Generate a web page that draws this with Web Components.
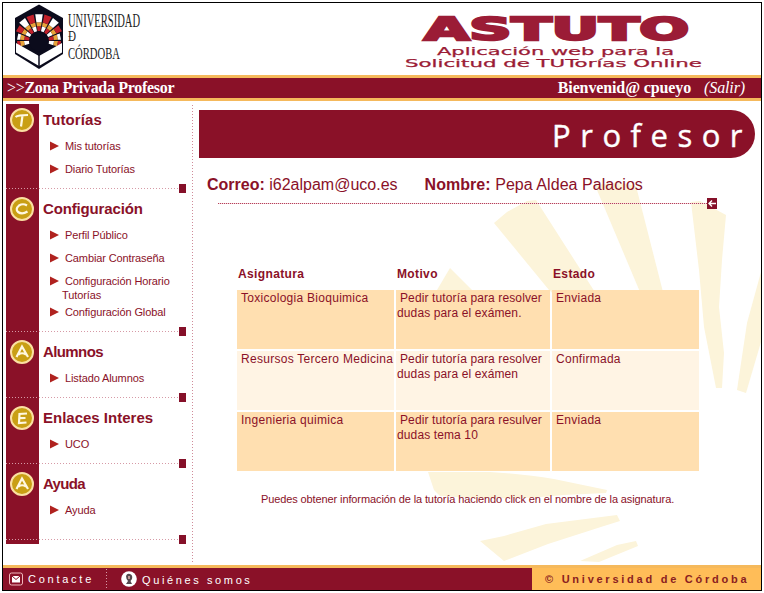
<!DOCTYPE html>
<html lang="es"><head><meta charset="utf-8"><title>Astuto</title>
<style>
html,body{margin:0;background:#fff}
body{font-family:"Liberation Sans",Arial,sans-serif;--wine:#8a1128;--gold:#f5b95c;color:#8a1128}
</style></head><body>
<astuto-app></astuto-app>
<script>
const def=(name,html,init)=>customElements.define(name,class extends HTMLElement{
  constructor(){super();this.attachShadow({mode:'open'});}
  connectedCallback(){this.shadowRoot.innerHTML=html;if(init)init(this,this.shadowRoot);}
});

def('uco-logo',`<style>:host{display:block;width:200px;height:70px}svg{display:block}</style>
<svg width="200" height="70" viewBox="0 0 200 70">
<path d="M36 1.500L60 15V51L36 66L12 51V15Z" fill="#0b0b1c"/>
<g id="rays"></g>
<circle cx="36" cy="39" r="9.500" fill="#0b0b1c"/>
<path d="M13 40L36 53V63L13 49.500ZM59 40L36 53V63L59 49.500Z" fill="#fff"/>
<path d="M36 52V65" stroke="#0b0b1c" stroke-width="1.500"/>
<g font-family="Liberation Serif,serif" font-size="18" fill="#222">
<text x="65" y="23.500" textLength="72" lengthAdjust="spacingAndGlyphs">UNIVERSIDAD</text>
<text x="65" y="38" font-size="14" textLength="8" lengthAdjust="spacingAndGlyphs">Đ</text>
<text x="65" y="56" font-size="17" textLength="52" lengthAdjust="spacingAndGlyphs">CÓRDOBA</text></g></svg>`,(h,r)=>{
  const g=r.getElementById('rays');let s='';
  const p=(a,d)=>`${(36+d*Math.cos(a)).toFixed(2)} ${(38-d*Math.sin(a)).toFixed(2)}`;
  for(let i=0;i<11;i++){
    const a=(-8+i*19.6)*Math.PI/180,w=.14;
    const outer=i>2&&i<8?27:(i==2||i==8?25:22);
    const band=(d1,d2,c)=>`<path fill="${c}" d="M${p(a-w,d1)}L${p(a-w,d2)}L${p(a+w,d2)}L${p(a+w,d1)}Z"/>`;
    s+=band(10,15,i%2?'#c3202b':'#fff')+band(15,19,'#e8a33a')+band(19,outer,i%2?'#fff':'#c3202b');
  }
  g.innerHTML=s;
});

def('astuto-brand',`<style>:host{display:block;width:310px;height:66px}svg{display:block}</style>
<svg width="310" height="66" viewBox="0 0 310 66" fill="#9b1c36" stroke="#9b1c36">
<text x="19" y="33" font-family="DejaVu Sans,sans-serif" font-weight="bold" font-size="32" stroke-width="2.400" textLength="265" lengthAdjust="spacingAndGlyphs">ASTUTO</text>
<g font-family="DejaVu Sans,sans-serif" font-size="11" stroke-width=".25">
<text x="32" y="48" textLength="237" lengthAdjust="spacingAndGlyphs">Aplicación web para la</text>
<text x="0" y="60" textLength="297" lengthAdjust="spacingAndGlyphs">Solicitud de TUTorías Online</text></g></svg>`);

def('title-strip',`<style>
:host{display:flex;justify-content:space-between;align-items:center;height:20px;padding:0 16px 0 4px;background:var(--wine);border:solid var(--gold);border-width:3px 0;color:#fff;font:bold 16px/20px "Liberation Serif",serif}
:host>div:first-of-type{letter-spacing:-.3px}
span,i{font-weight:normal}.r{display:flex;gap:13px;letter-spacing:-.12px}i{white-space:pre}</style>
<div><span>&gt;&gt;</span><slot></slot></div><div class="r"><slot name="user"></slot><i>(Salir)</i></div>`);

def('menu-item',`<style>:host{display:block;font-size:11px;line-height:14px;padding:4.500px 0;color:#8a1128}
:host(.two){padding-bottom:0;margin-bottom:-1.500px}
svg{vertical-align:-1px;margin-right:6px}div{padding-left:23px;text-indent:-12px}</style>
<div><svg width="9" height="10"><path d="M0 .5L9 5L0 9.500Z" fill="#b0221f"/></svg><slot></slot></div>`);

def('menu-section',`<style>
:host{display:block;padding-top:8px;position:relative}
header{height:24px;display:flex;align-items:center;gap:9px;padding-left:4px;margin-bottom:2px;font:bold 15px/24px "Liberation Sans",sans-serif}
svg{flex:none}.items{padding-left:33px}
footer{height:1px;margin-top:8px;width:173px;background:repeating-linear-gradient(90deg,#d69aa6 0 1px,transparent 1px 3px)}
:host([last]) footer{margin-top:18px}
.end{position:absolute;right:6px;bottom:-4px;width:7px;height:9px;background:#851029}</style>
<header><svg width="24" height="24"><circle cx="12" cy="12" r="11" fill="#c99f14" stroke="#fbe0a2" stroke-width="2"/><path fill="none" stroke="#fff8e0" stroke-width="2.200"/></svg><span></span></header>
<div class="items"><slot></slot></div><footer></footer><div class="end"></div>`,(h,r)=>{
  const glyph={T:'M5.500 9Q8 7 18 7M12.500 7.500L11 18.500',C:'M17 8.500Q13 6 9 8.500Q5 12 8 15Q12 18 17.500 14.500',A:'M6.500 17L12 6.500L18 17M8.500 14.500Q12 12 16 14.500',E:'M17 7.500L9.500 8L9 17L16.500 16.500M9.500 12.200L15.500 12'};
  r.querySelector('header path').setAttribute('d',glyph[h.getAttribute('badge')]);
  const s=r.querySelector('span');s.textContent=h.getAttribute('label');s.style.letterSpacing=(h.getAttribute('track')||0)+'px';
});

def('side-menu',`<style>:host{display:block;width:186px;height:436px;padding-bottom:4px;margin-left:3px;background:linear-gradient(90deg,var(--wine) 33px,transparent 33px)}
.first{padding-top:4px}menu-item{letter-spacing:-.11px}</style>
<menu-section class="first" badge="T" label="Tutorías" track=".1"><menu-item>Mis tutorías</menu-item><menu-item>Diario Tutorías</menu-item></menu-section>
<menu-section badge="C" label="Configuración" track="-.15"><menu-item>Perfil Público</menu-item><menu-item>Cambiar Contraseña</menu-item><menu-item class="two">Configuración Horario<br>Tutorías</menu-item><menu-item>Configuración Global</menu-item></menu-section>
<menu-section badge="A" label="Alumnos" track="-.6"><menu-item>Listado Alumnos</menu-item></menu-section>
<menu-section badge="E" label="Enlaces Interes"><menu-item>UCO</menu-item></menu-section>
<menu-section last badge="A" label="Ayuda" track="-.7"><menu-item>Ayuda</menu-item></menu-section>`);

def('page-banner',`<style>:host{display:flex;justify-content:flex-end;align-items:center;box-sizing:border-box;width:556px;height:48px;padding:1px 3px 0 0;border-radius:0 24px 24px 0;background:var(--wine);color:#fff;font:31px/48px "Open Sans","Noto Sans",sans-serif;letter-spacing:9.500px;-webkit-text-stroke:.4px #fff}</style><slot></slot>`);

def('contact-line',`<style>:host{display:flex;gap:27px;padding:17px 0 0 8px;font-size:16px;line-height:20px;height:20px;white-space:nowrap}
.n{letter-spacing:.05px}</style><span><b>Correo:</b> i62alpam@uco.es</span><span class="n"><b>Nombre:</b> Pepa Aldea Palacios</span>`);

def('back-rule',`<style>:host{display:flex;align-items:center;width:499px;height:11px;margin:3px 0 0 19px}
i{flex:1;height:1px;background:repeating-linear-gradient(90deg,#b5405a 0 1px,#f3d5da 1px 2px)}</style>
<i></i><svg width="10" height="11"><path d="M0 0H10V11H0Z" fill="#851029"/><path d="M9 5.500H2M5 2.500L2 5.500L5 8.500" stroke="#fff" stroke-width="1.400" fill="none"/></svg>`);

def('request-table',`<style>
:host{display:grid;grid-template-columns:157px 154px 147px;column-gap:2px;row-gap:2px;margin:55px 0 0 38px;width:max-content;font-size:12px;line-height:15px}
b{height:24px;line-height:21px;font-size:12px;padding-left:1px;letter-spacing:.36px}
div{height:59px;box-sizing:border-box;padding:1px 0 0 4px;background:#ffdfb0;white-space:nowrap;letter-spacing:.28px}
div.l{background:#fff4e4}div.m{padding-left:1px;letter-spacing:.12px}.m span{padding-left:3px}</style>
<b>Asignatura</b><b>Motivo</b><b>Estado</b>
<div>Toxicologia Bioquimica</div><div class="m"><span>Pedir tutoría para resolver</span><br>dudas para el exámen.</div><div>Enviada</div>
<div class="l">Resursos Tercero Medicina</div><div class="m l"><span>Pedir tutoría para resolver</span><br>dudas para el exámen</div><div class="l">Confirmada</div>
<div>Ingenieria quimica</div><div class="m"><span>Pedir tutoría para resulver</span><br>dudas tema 10</div><div>Enviada</div>`);

def('fan-art',`<style>:host{display:block;position:absolute;left:0;top:0}svg{display:block}</style>
<svg width="764" height="564" fill="#fcf4da">
<path d="M494 223L507 212L527 201L536 200L600 300H560L549 290Z"/>
<path d="M594 186Q615 180 636 186L663 292H640L597 190Z"/>
<path d="M691 202L700 201L726 215L722 260L719 307L724 353L722 388L716 388L704 327L699 270Z"/>
<path d="M761 272L747 323L737 390L746 393L761 342Z"/>
<path d="M437 290L450 268L472 290Z"/>
<path d="M428 472H490Q525 474 554 479L607 490L606 493L564 495Q510 501 440 496L434 490Z"/>
<path d="M480 541L504 536L546 524L617 515L620 521L604 526L548 544L504 561Z"/>
<path d="M580 561L617 545L636 541L638 546L599 562Z"/></svg>`);

def('site-footer',`<style>
:host{display:flex;height:22px;border-top:3px solid var(--gold);background:var(--wine);color:#fff;font-size:11px;line-height:22px}
.l{flex:1;display:flex;align-items:center;padding-left:6px;white-space:nowrap}
.c{margin-left:5px;letter-spacing:2.750px;width:78px}.q{margin-left:5px;letter-spacing:2.620px;position:relative;top:1px}
i{width:1px;height:20px;margin-right:14px;background:repeating-linear-gradient(#d69aa6 0 1px,transparent 1px 3px)}
.r{box-sizing:border-box;width:229px;padding-left:13px;background:#ffbd58;color:#8a2020;font-weight:bold;letter-spacing:2.750px;white-space:nowrap}</style>
<div class="l"><svg width="14" height="14"><rect x=".5" y="1" width="13" height="12" rx="2" fill="none" stroke="#f0b8bc"/><path d="M3 4H11V10.500H3Z" fill="#fff"/><path d="M3 4L7 7.500L11 4" fill="none" stroke="#8a1128"/></svg><span class="c">Contacte</span><i></i><svg width="16" height="16"><circle cx="8" cy="8" r="7.800" fill="#fff"/><path d="M5 5Q6 2 9 3Q12 4 11 8L9.500 10L11 13H5L7 10Q5 8 5 5Z" fill="#54474d"/><path d="M7 5L9 5L9 8L7 8Z" fill="#bd9a95"/></svg><span class="q">Quiénes somos</span></div>
<div class="r">© Universidad de Córdoba</div>`);

def('astuto-app',`<style>
:host{display:block;position:relative;width:758px;height:587px;margin:2px;border:1px solid #000;overflow:hidden;background:#fff}
.top{display:flex;justify-content:space-between;height:72px}astuto-brand{margin:4px 46px 0 0}
.body{display:flex;height:464px}.side{padding-top:3px}
.v{width:1px;height:457px;margin-top:4px;background:repeating-linear-gradient(#d08b99 0 1px,transparent 1px 3px)}
main{padding:9px 0 0 6px}
p{margin:21px 0 0 62px;font-size:11px;line-height:14px;letter-spacing:-.11px;white-space:nowrap}
fan-art{left:-3px;top:-3px}.layer{position:relative}</style>
<fan-art></fan-art>
<div class="layer"><div class="top"><uco-logo></uco-logo><astuto-brand></astuto-brand></div>
<title-strip>Zona Privada Profesor<span slot="user">Bienvenid@ cpueyo</span></title-strip>
<div class="body"><div class="side"><side-menu></side-menu></div><div class="v"></div>
<main><page-banner>Profesor</page-banner><contact-line></contact-line><back-rule></back-rule><request-table></request-table>
<p>Puedes obtener información de la tutoría haciendo click en el nombre de la asignatura.</p></main></div>
<site-footer></site-footer></div>`);
</script></body></html>
